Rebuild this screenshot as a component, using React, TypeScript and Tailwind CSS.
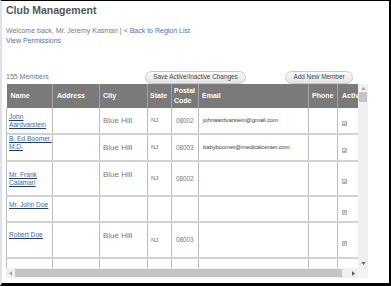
const cols = [46, 47, 48, 24, 27, 110, 29, 32];

type Member = {
  name: string[];
  city: string;
  state: string;
  zip: string;
  email: string;
  h: number;
  nameShift: string;
};

const members: Member[] = [
  { name: ['John', 'Aardvarstein'], city: 'Blue Hill', state: 'NJ', zip: '08002', email: 'johnaardvarstein@gmail.com', h: 26, nameShift: '' },
  { name: ['B. Ed Boomer,', 'M.D.'], city: 'Blue Hill', state: 'NJ', zip: '08003', email: 'babyboomer@medicalcenter.com', h: 26, nameShift: 'pb-[9px]' },
  { name: ['Mr. Frank', 'Calamari'], city: 'Blue Hill', state: 'NJ', zip: '08002', email: '', h: 35, nameShift: '' },
  { name: ['Mr. John Doe'], city: '', state: '', zip: '', email: '', h: 26, nameShift: 'pb-2' },
  { name: ['Robert Doe'], city: 'Blue Hill', state: 'NJ', zip: '08003', email: '', h: 36, nameShift: 'pb-[10px]' },
  { name: [''], city: '', state: '', zip: '', email: '', h: 40, nameShift: '' },
];

function Check() {
  return (
    <span className="inline-flex h-[5px] w-[5px] items-center justify-center border border-[#b5b5b5] bg-[#ececec]">
      <svg width="4" height="4" viewBox="0 0 10 10">
        <path d="M1.5 5.5 L4 8 L8.5 2" fill="none" stroke="#555" strokeWidth="2.2" />
      </svg>
    </span>
  );
}

function Pill({ children, w }: { children: React.ReactNode; w: string }) {
  return (
    <div
      className={`flex h-[13px] ${w} items-center justify-center rounded-full border border-[#c9c9c9] bg-gradient-to-b from-[#fbfbfb] to-[#e4e4e4] text-[6.4px] text-[#444]`}
    >
      {children}
    </div>
  );
}

export default function App() {
  return (
    <div
      className="h-[286px] w-[391px] overflow-hidden border-t border-r-2 border-b-[3px] border-l-2 border-t-black border-r-black border-b-black border-l-[#dfe2ea] bg-white pl-[4px]"
      style={{ fontFamily: '"Liberation Sans", Arial, sans-serif' }}
    >
      <h1 className="pt-[3px] text-[10.5px] font-bold leading-[13px] text-[#555]">Club Management</h1>
      <div className="mt-[9px] text-[7px] leading-[10px] text-[#7a7a7a]">
        Welcome back, Mr. Jeremy Kasman | <span className="text-[#4a6fb8]">&lt; Back to Region List</span>
      </div>
      <div className="text-[7px] leading-[10px] text-[#4a6fb8]">View Permissions</div>

      <div className="mt-[24px] flex h-[14px] items-center">
        <div className="w-[139px] text-[7px] text-[#777]">155 Members</div>
        <Pill w="w-[101px]">Save Active/Inactive Changes</Pill>
        <div className="w-[39px]" />
        <Pill w="w-[68px]">Add New Member</Pill>
      </div>

      <div className="flex">
        <div className="h-[184px] w-[352px] overflow-hidden">
          <table className="table-fixed border-collapse" style={{ width: cols.reduce((a, b) => a + b, 0) }}>
            <colgroup>
              {cols.map((w, i) => (
                <col key={i} style={{ width: w }} />
              ))}
            </colgroup>
            <thead>
              <tr className="h-[24px] bg-[#7a7a7a] text-left text-[7px] font-bold leading-[10px] text-white">
                <th className="border-r border-[#a3a3a3] pl-[4px]">Name</th>
                <th className="border-r border-[#a3a3a3] pl-[4px]">Address</th>
                <th className="border-r border-[#a3a3a3] pl-[3px]">City</th>
                <th className="border-r border-[#a3a3a3] pl-[2px]">State</th>
                <th className="border-r border-[#a3a3a3] pl-[2px]">
                  Postal
                  <br />
                  Code
                </th>
                <th className="border-r border-[#a3a3a3] pl-[3px]">Email</th>
                <th className="border-r border-[#a3a3a3] pl-[3px]">Phone</th>
                <th className="pl-[4px]">Active</th>
              </tr>
            </thead>
            <tbody>
              {members.map((m, i) => (
                <tr key={i} style={{ height: m.h }} className="border-b-2 border-[#d2d2d2] align-middle">
                  <td className={`border-x border-[#bcbcbc] pl-[2px] text-[6.6px] leading-[8px] ${m.nameShift}`}>
                    {m.name[0] && (
                      <a className="text-[#3d67b3] underline decoration-[#1d3c84]">
                        {m.name.map((n, j) => (
                          <span key={j} className="block underline decoration-[#1d3c84]">
                            {n}
                          </span>
                        ))}
                      </a>
                    )}
                  </td>
                  <td className="border-r border-[#bcbcbc]" />
                  <td className="border-r border-[#bcbcbc] pl-[3px] pt-[7px] align-top text-[8px] text-[#7a7a7a]">
                    {m.city}
                  </td>
                  <td className="border-r border-[#bcbcbc] pl-[3px] text-[6px] text-[#666]">{m.state}</td>
                  <td className="border-r border-[#bcbcbc] pl-[4px] text-[6.3px] text-[#777]">{m.zip}</td>
                  <td className="border-r border-[#bcbcbc] pl-[4px] text-[6px] tracking-[-0.1px] text-[#444]">{m.email}</td>
                  <td className="border-r border-[#bcbcbc]" />
                  <td className={`pl-[4px] ${i === 5 ? 'align-top pt-[6px]' : ''}`}>
                    <Check />
                  </td>
                </tr>
              ))}
            </tbody>
          </table>
        </div>

        <div className="flex h-[184px] w-[10px] flex-col items-center bg-[#f0f0f0] pt-[3px]">
          <svg width="5" height="3" viewBox="0 0 6 4">
            <path d="M0 4 L3 0 L6 4 Z" fill="#a6a6a6" />
          </svg>
          <div className="mt-[2px] h-[10px] w-[8px] bg-[#c4c4c4]" />
          <div className="flex-1" />
          <svg width="5" height="3" viewBox="0 0 6 4" className="mb-[3px]">
            <path d="M0 0 L6 0 L3 4 Z" fill="#666" />
          </svg>
        </div>
      </div>

      <div className="flex h-[10px]">
        <div className="flex w-[352px] items-center bg-[#f0f0f0] pl-[3px] pr-[3px]">
          <svg width="3" height="5" viewBox="0 0 4 6">
            <path d="M4 0 L0 3 L4 6 Z" fill="#a6a6a6" />
          </svg>
          <div className="ml-[3px] h-[8px] w-[327px] bg-[#c4c4c4]" />
          <div className="flex-1" />
          <svg width="3" height="5" viewBox="0 0 4 6">
            <path d="M0 0 L4 3 L0 6 Z" fill="#555" />
          </svg>
        </div>
        <div className="w-[10px] bg-[#f4f4f4]" />
      </div>
    </div>
  );
}
